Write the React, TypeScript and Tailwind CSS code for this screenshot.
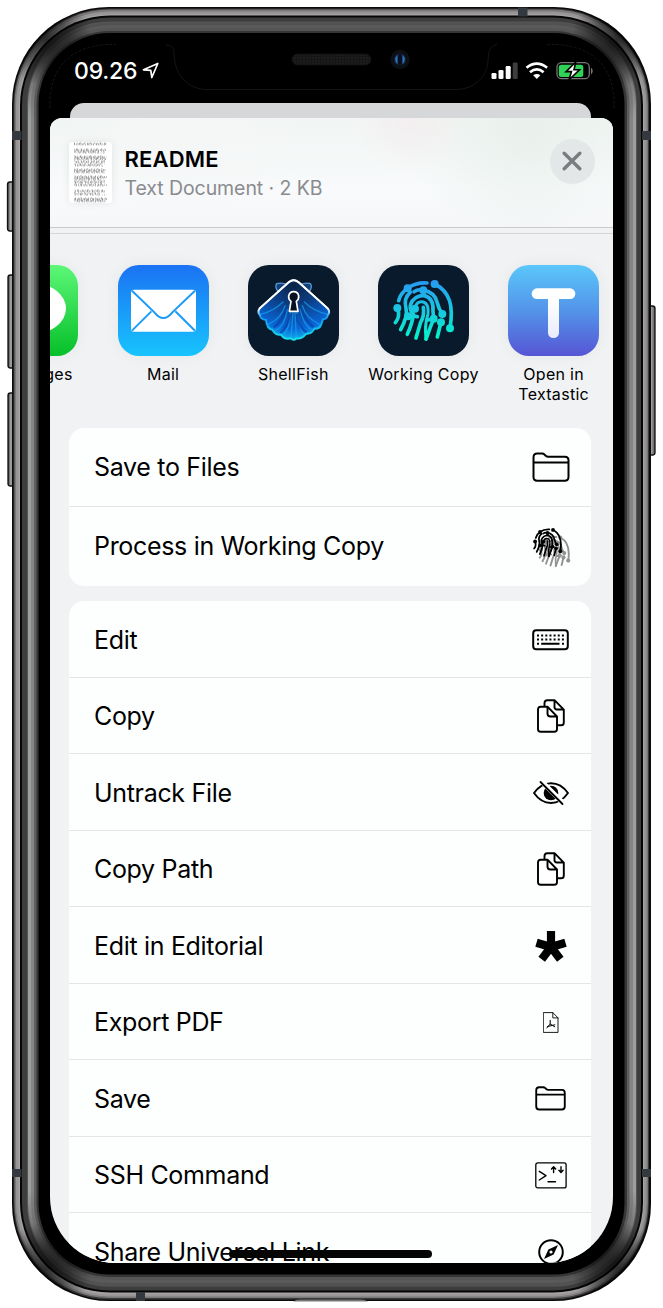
import type { ReactNode } from "react";

type Layer = { x: number; y: number; r: number; b: number; rx: number; fill: string };

const layers: Layer[] = [
  { x: 12, y: 7, r: 651, b: 1301, rx: 97, fill: "#0b0b0c" },
  { x: 13.5, y: 8.5, r: 649, b: 1299.5, rx: 96, fill: "#3c3a3b" },
  { x: 14.5, y: 9.5, r: 648, b: 1298, rx: 95, fill: "#7b7879" },
  { x: 16, y: 11.5, r: 646.5, b: 1296.5, rx: 94, fill: "#989596" },
  { x: 18.5, y: 14, r: 644, b: 1294.5, rx: 92, fill: "#a5a2a3" },
  { x: 20, y: 15.5, r: 643, b: 1292.5, rx: 90, fill: "#060606" },
  { x: 22, y: 17.5, r: 641, b: 1290.5, rx: 88, fill: "#3c3d3c" },
  { x: 27, y: 21.5, r: 637, b: 1286.5, rx: 83, fill: "#565656" },
  { x: 28, y: 22.5, r: 636, b: 1285.5, rx: 82, fill: "url(#band1)" },
  { x: 31, y: 25, r: 633, b: 1283, rx: 79, fill: "url(#band2)" },
  { x: 34, y: 28, r: 629.5, b: 1280, rx: 76, fill: "url(#band3)" },
  { x: 36.5, y: 31, r: 627, b: 1277, rx: 73, fill: "#363636" },
  { x: 38.5, y: 33, r: 624.5, b: 1274.5, rx: 71, fill: "#000" },
];

function Shell() {
  const keys = [
    { x: 7.5, y: 182, h: 49 },
    { x: 8, y: 275, h: 93 },
    { x: 8, y: 393, h: 93 },
    { x: 648, y: 306, h: 149 },
  ];
  const band = (id: string, side: string, flat: string) => (
    <linearGradient id={id} x1="0" y1="0" x2="0" y2="1">
      <stop offset="0" stopColor={flat} />
      <stop offset=".02" stopColor={flat} />
      <stop offset=".075" stopColor={side} />
      <stop offset=".925" stopColor={side} />
      <stop offset=".98" stopColor={flat} />
      <stop offset="1" stopColor={flat} />
    </linearGradient>
  );
  return (
    <svg className="absolute inset-0" width="663" height="1308" viewBox="0 0 663 1308" aria-hidden="true">
      <defs>
        {band("band1", "#9d9d9d", "#515151")}
        {band("band2", "#858585", "#5a5a5a")}
        {band("band3", "#5f5f5f", "#555555")}
        <radialGradient id="corner">
          <stop offset="0" stopColor="#000" stopOpacity=".7" />
          <stop offset=".5" stopColor="#000" stopOpacity=".45" />
          <stop offset="1" stopColor="#000" stopOpacity="0" />
        </radialGradient>
        <linearGradient id="key">
          <stop offset="0" stopColor="#333" />
          <stop offset=".4" stopColor="#aaa8a9" />
          <stop offset="1" stopColor="#555" />
        </linearGradient>
        <clipPath id="body">
          <rect x="12" y="7" width="639" height="1294" rx="97" />
        </clipPath>
        <pattern id="mesh" width="3" height="3" patternUnits="userSpaceOnUse">
          <rect width="3" height="3" fill="#161616" />
          <circle cx="1" cy="1" r=".7" fill="#292929" />
        </pattern>
      </defs>
      {keys.map((k) => (
        <rect key={k.y} x={k.x} y={k.y} width="7" height={k.h} rx="2.5" fill="url(#key)" stroke="#111" strokeWidth="1.3" />
      ))}
      {layers.map((l) => (
        <rect key={l.x} x={l.x} y={l.y} width={l.r - l.x} height={l.b - l.y} rx={l.rx} fill={l.fill} />
      ))}
      <g clipPath="url(#body)">
        <circle cx="46" cy="40" r="46" fill="url(#corner)" />
        <circle cx="617" cy="40" r="46" fill="url(#corner)" />
        <circle cx="46" cy="1268" r="46" fill="url(#corner)" />
        <circle cx="617" cy="1268" r="46" fill="url(#corner)" />
      </g>
      <g fill="#343940">
        <rect x="12" y="131" width="9.5" height="9" />
        <rect x="642" y="131" width="9" height="9" />
        <rect x="12" y="1169" width="9.5" height="8" />
        <rect x="642" y="1169" width="9" height="8" />
        <rect x="518" y="7.5" width="9.5" height="9" />
        <rect x="136" y="1292" width="9" height="9" />
      </g>
      <path d="M293 1301.500Q296 1299.500 300 1299.500H361Q365 1299.500 368 1301.500Z" fill="#777" />
      <g fill="none" stroke="#1a1a1a" strokeWidth=".8">
        <path d="M50 108V98Q54 49 106 44.500H116" strokeDasharray="3 1.5" />
        <path d="M614 108V98Q610 49 558 44.500H547" strokeDasharray="3 1.5" />
        <path d="M166 45Q174 45 174 53C174 75 188 89.500 207 89.500H456C475 89.500 488 75 488 60Q488 45 497 44.500" />
      </g>
      <rect x="292" y="54" width="79" height="11" rx="5.500" fill="url(#mesh)" stroke="#101010" />
      <circle cx="400" cy="59.500" r="9.700" fill="#0d0f14" />
      <circle cx="400" cy="59.500" r="6" fill="#10213b" />
      <path d="M397.500 54.800Q392.500 59.500 397.500 64.200Z" fill="#2e74b5" />
      <path d="M402.500 54.800Q407.500 59.500 402.500 64.200Z" fill="#2e74b5" />
      <rect x="398" y="54" width="4" height="11" rx="2" fill="#08101f" />
    </svg>
  );
}

function StatusBar() {
  return (
    <div className="flex h-[69px] shrink-0 items-start pt-[21.500px] pr-[19.500px] pl-[24px]">
      <span className="text-[23px] leading-[32px] font-medium tracking-[-0.2px] text-white">09.26</span>
      <svg className="mt-[7px] ml-[4.500px]" width="18" height="18" viewBox="0 0 18 18">
        <path d="M1.500 7.800 15.800 1.500 9.800 15.500 8.800 8.400Z" fill="none" stroke="#fff" strokeWidth="1.700" strokeLinejoin="round" />
      </svg>
      <svg className="mt-[5.500px] ml-auto" width="104" height="22" viewBox="490 60 104 22">
        <g fill="#fff">
          <rect x="491.500" y="73" width="5" height="6" rx="1.300" />
          <rect x="498.500" y="70" width="5" height="9" rx="1.300" />
          <rect x="505.700" y="66" width="5" height="13" rx="1.300" />
          <rect x="512.700" y="62.500" width="5" height="16.500" rx="1.300" fill="#3d3d40" />
          <path d="M533.200 75.200Q536.800 72.700 540.400 75.200L536.800 79Z" />
        </g>
        <g fill="none" stroke="#fff" strokeWidth="2.700">
          <path d="M526.500 67.700Q536.800 59.500 547.100 67.700" />
          <path d="M530 72.200Q536.800 66.500 543.600 72.200" />
        </g>
        <rect x="557" y="62.700" width="32.300" height="16" rx="4.500" fill="none" stroke="#77777a" strokeWidth="1.300" />
        <path d="M591 67.500Q594.500 71 591 74.500Z" fill="#77777a" />
        <rect x="558.800" y="64.700" width="24.500" height="12.200" rx="2.500" fill="#31d158" />
        <path d="M575.800 62 566 71.600H571.500L569 79.800 579.500 69.800H574Z" fill="#fff" stroke="#000" strokeWidth="1.600" />
      </svg>
    </div>
  );
}

function Thumb() {
  const rows = [3, 9, 11, 16, 18, 21, 24, 29, 31, 36, 38, 41, 44, 50, 53, 58, 60];
  return (
    <svg className="shrink-0 rounded-[4px] bg-white shadow-[0_0_9px_rgba(0,0,0,0.08)]" width="43" height="61" viewBox="0 0 43 61">
      {rows.map((y, i) => (
        <g key={y} stroke="#666" strokeWidth="1">
          <line x1="5" x2={i % 4 === 2 ? 31 : 38 - (i % 3)} y1={y - 1} y2={y - 1} strokeDasharray={`${1 + (i % 2) * 0.4} 1.100 .7 1.700 1.600 .9 .6 ${1 + (i % 3) * 0.6}`} strokeDashoffset={i * 2.7} />
          <line x1="5" x2={37 - (i % 5)} y1={y - 2} y2={y - 2} strokeDasharray="1 2.300 .6 1.600 1.500 3.100" strokeDashoffset={i * 3.3} strokeOpacity=".7" />
          <line x1="5.500" x2="36" y1={y} y2={y} strokeDasharray={`.7 1.500 ${1 + (i % 4) * 0.3} 2.200`} strokeDashoffset={i * 1.9} strokeOpacity=".6" />
        </g>
      ))}
    </svg>
  );
}

function Header() {
  return (
    <header className="flex h-[110px] shrink-0 items-start border-b border-[#c9cbcd] bg-[radial-gradient(circle_at_24%_0,#f5f7f7_0,transparent_28%),radial-gradient(circle_at_64%_0,#f3eeef_0,transparent_15%),radial-gradient(circle_at_85%_8%,#e9f1ec_0,transparent_25%),linear-gradient(#f1f5f3_0,#f8fafb_65%,#f6f7f9_100%)] pt-[24px] pr-[18.500px] pl-[19px]">
      <Thumb />
      <div className="ml-[12.500px] pt-[2.500px]">
        <h1 className="text-[22px] leading-[29px] font-semibold tracking-[0.2px] text-black">README</h1>
        <p className="text-[19.500px] leading-[29px] tracking-[-0.08px] text-[#8a8b8e]">Text Document · 2 KB</p>
      </div>
      <button aria-label="Close" className="mt-[-3.500px] ml-auto flex size-[45px] items-center justify-center rounded-full bg-[#e3e7e8]">
        <svg width="20" height="20" viewBox="0 0 20 20">
          <path d="M2.200 2.200 17.800 17.800M17.800 2.200 2.200 17.800" stroke="#797d7f" strokeWidth="3.400" strokeLinecap="round" />
        </svg>
      </button>
    </header>
  );
}

const printDots: [number, number][] = [[203, 116], [284, 103], [172, 175], [250, 122], [307, 193], [225, 177], [204, 200], [281, 207], [303, 218], [330, 236]];

function Print({ color }: { color: string }) {
  return (
    <g stroke={color} fill="none" strokeWidth="11" strokeLinecap="round" strokeLinejoin="round">
      <path d="M176 153Q182 130 203 116Q227 98 261 100" />
      <path d="M284 103C330 126 341 168 330 236" />
      <path d="M172 175C179 192 176 207 166 219" />
      <path d="M203 116 211 128Q190 145 198 176Q204 199 182 240" />
      <path d="M222 126Q235 117 250 122Q285 127 292 160Q296 177 307 193" />
      <path d="M250 122V137Q221 139 212 164Q207 181 220 193Q218 218 202 254" />
      <path d="M250 137Q282 143 279 185L281 207" />
      <path d="M225 177Q228 153 250 157Q267 162 264 193Q253 226 258 268" strokeWidth="9" />
      <path d="M204 200Q220 197 232 201M250 173Q254 198 242 218L228 265" />
      <path d="M281 207Q270 235 258 268" />
      <path d="M281 207 264 211" />
      <path d="M303 218 292 262" />
      {printDots.map(([cx, cy]) => (
        <circle key={`${cx}-${cy}`} cx={cx} cy={cy} r="12" fill={color} stroke="none" />
      ))}
    </g>
  );
}

function MessagesIcon() {
  return (
    <svg width="91" height="91" viewBox="0 0 91 91">
      <defs><linearGradient id="msg" x1="0" y1="0" x2="0" y2="1"><stop stopColor="#5cf777" /><stop offset="1" stopColor="#06bf29" /></linearGradient></defs>
      <rect width="91" height="91" rx="21" fill="url(#msg)" />
      <ellipse cx="45.500" cy="43.500" rx="33.500" ry="25.500" fill="#fff" />
    </svg>
  );
}

function MailIcon() {
  return (
    <svg width="91" height="91" viewBox="233 46 273 273">
      <defs><linearGradient id="mail" x1="0" y1="0" x2="0" y2="1"><stop stopColor="#1b72f3" /><stop offset="1" stopColor="#17c4fd" /></linearGradient></defs>
      <rect x="233" y="46" width="273" height="273" rx="63" fill="url(#mail)" />
      <rect x="272" y="120" width="195" height="126" rx="9" fill="#fff" />
      <path d="M275 123 342 188Q369 222 396 188L464 123M275 243 333 185M464 243 405 185" fill="none" stroke="#1b9bf8" strokeWidth="6" />
    </svg>
  );
}

function ShellFishIcon() {
  return (
    <svg width="91" height="91" viewBox="623 46 273 273">
      <defs>
        <radialGradient id="shell" cx=".5" cy=".1" r=".95"><stop stopColor="#0b2348" /><stop offset=".35" stopColor="#0c3f86" /><stop offset=".75" stopColor="#0a66d8" /><stop offset="1" stopColor="#12c8ee" /></radialGradient>
        <linearGradient id="rim" x1="0" y1="0" x2="0" y2="1"><stop stopColor="#fff" /><stop offset=".48" stopColor="#eaf6ff" /><stop offset=".62" stopColor="#1398ee" /><stop offset="1" stopColor="#16e6ee" /></linearGradient>
      </defs>
      <rect x="623" y="46" width="273" height="273" rx="63" fill="#0a1a2d" />
      <path d="M712 124Q703 111 709 102Q727 98 741 105M779 105Q797 98 810 102Q817 111 808 124" fill="#153f77" stroke="#5299d5" strokeWidth="4" />
      <path d="M746 97Q760 86 774 97L862 176Q871 187 862 197Q860 208 848 209L842 226Q837 238 822 237Q814 254 798 252Q783 270 768 266Q760 275 751 266Q733 271 722 255Q706 257 696 240Q680 239 677 211Q661 209 659 197Q650 187 658 176Z" fill="url(#shell)" stroke="url(#rim)" strokeWidth="6" />
      <g fill="none" stroke="#16a7f5" strokeOpacity=".65" strokeWidth="4" strokeLinecap="round">
        <path d="M734 168Q724 206 684 224M741 180Q734 229 704 244M750 190Q748 236 729 258M758 190 752 262M764 190 768 262M770 190Q776 236 791 254M780 180Q789 228 816 241M786 168Q796 205 838 224M660 194Q700 185 728 157M862 194Q820 185 792 157" />
      </g>
      <g fill="none" stroke="#0743a8" strokeWidth="7" strokeOpacity=".7"><path d="M738 175Q726 215 700 234M750 192Q743 232 720 250M783 177Q795 215 820 232M769 193Q775 235 799 248" /></g>
      <path d="M658 176 746 97Q760 86 774 97L862 176" fill="none" stroke="#fff" strokeWidth="5" strokeLinecap="round" />
      <path d="M747 185 752 155Q744 149 745 139Q748 126 760 126Q773 126 775 139Q776 149 768 155L773 185Z" fill="#07111f" stroke="#fff" strokeWidth="5" strokeLinejoin="round" />
    </svg>
  );
}

function WorkingCopyIcon() {
  return (
    <svg width="91" height="91" viewBox="114 46 273 273">
      <defs><linearGradient id="copy" gradientUnits="userSpaceOnUse" x1="0" y1="95" x2="0" y2="272"><stop stopColor="#279bf2" /><stop offset=".5" stopColor="#18c9df" /><stop offset="1" stopColor="#05f4c9" /></linearGradient></defs>
      <rect x="114" y="46" width="273" height="273" rx="63" fill="#0a1a2d" />
      <Print color="url(#copy)" />
    </svg>
  );
}

function TextasticIcon() {
  return (
    <svg width="91" height="91" viewBox="504 46 273 273">
      <defs>
        <linearGradient id="tt" x1="0" y1="0" x2="0" y2="1"><stop stopColor="#5bc7fa" /><stop offset=".5" stopColor="#5394e9" /><stop offset="1" stopColor="#5655d4" /></linearGradient>
        <linearGradient id="tstem" gradientUnits="userSpaceOnUse" x1="0" y1="150" x2="0" y2="264"><stop stopColor="#fff" /><stop offset="1" stopColor="#e8ecfb" /></linearGradient>
      </defs>
      <rect x="504" y="46" width="273" height="273" rx="63" fill="url(#tt)" />
      <rect x="624" y="120" width="33" height="145" rx="16" fill="url(#tstem)" />
      <rect x="575" y="116" width="131" height="32" rx="16" fill="#fff" />
    </svg>
  );
}

const apps: { name: ReactNode; icon: ReactNode }[] = [
  { name: "Messages", icon: <MessagesIcon /> },
  { name: "Mail", icon: <MailIcon /> },
  { name: "ShellFish", icon: <ShellFishIcon /> },
  { name: "Working Copy", icon: <WorkingCopyIcon /> },
  { name: <>Open in<br />Textastic</>, icon: <TextasticIcon /> },
];

function AppRow() {
  return (
    <div className="mt-[5px] ml-[-82.200px] flex h-[195px] w-[651px] shrink-0 border-t border-[#d3d5d7] pt-[31px]">
      {apps.map((a, i) => (
        <div key={i} className="flex w-[130.200px] shrink-0 flex-col items-center">
          <div className="rounded-[21px] shadow-[0_0_16px_rgba(0,0,0,0.05)]">{a.icon}</div>
          <span className="mt-[8px] text-center text-[16px] leading-[20px] tracking-[0.3px] whitespace-nowrap text-black">{a.name}</span>
        </div>
      ))}
    </div>
  );
}

const line = { fill: "none", stroke: "#000", strokeLinecap: "round", strokeLinejoin: "round" } as const;

function Folder({ size }: { size: number }) {
  return (
    <svg width={size} height={size * 0.8} viewBox="0 0 38 30.400" {...line} strokeWidth={size > 35 ? 2 : 2.300}>
      <path d="M1.500 5.200Q1.500 1.500 5.200 1.500H10Q11.500 1.500 12.700 2.700L13.700 3.700Q14.800 4.700 16.400 4.700H33Q36.500 4.700 36.500 8.200V25Q36.500 28.800 32.800 28.800H5.200Q1.500 28.800 1.500 25ZM1.500 10.500H36.500" />
    </svg>
  );
}

function PrintStack() {
  return (
    <svg width="40" height="44" viewBox="92 282 120 132">
      <g transform="translate(32 269) scale(.52)"><Print color="#929292" /></g>
      <g transform="translate(21.700 250.400) scale(.48)"><Print color="#000" /></g>
    </svg>
  );
}

function Keyboard() {
  return (
    <svg width="37" height="22" viewBox="0 0 37 22" {...line} strokeWidth="2">
      <rect x="1.200" y="1.200" width="34.600" height="19.100" rx="3" />
      <g strokeLinecap="butt">
        <path d="M5 6.500H32M5 10.500H32" strokeDasharray="2 2.150" />
        <path d="M5 14.800H7M9.200 14.800H27.500M30 14.800H32" />
      </g>
    </svg>
  );
}

function Docs() {
  return (
    <svg width="28" height="34" viewBox="0 0 28 34" {...line} strokeWidth="1.900">
      <path d="M7.500 7V4Q7.500 1.200 10.300 1.200H17.500L26.800 10.700V23.400Q26.800 26.300 24 26.300H20.500M17.500 1.200V8Q17.500 10.500 20 10.500H26.500" />
      <path d="M10.500 7.700H3.600Q1 7.700 1 10.400V30Q1 32.800 3.700 32.800H17.200Q20 32.800 20 30V17.500ZM10.500 7.700V14.500Q10.500 17.500 13.500 17.500H20" fill="#fff" />
    </svg>
  );
}

function EyeOff() {
  return (
    <svg width="36" height="26" viewBox="0 0 36 26" {...line} strokeWidth="1.900">
      <path d="M1 13Q8 3.200 18 3.200T35 13Q28 23 18 23T1 13Z" />
      <circle cx="18" cy="13" r="7.300" fill="#000" stroke="none" />
      <path d="M8 .8 31 23.700" stroke="#fff" strokeWidth="4.800" />
      <path d="M7.500 2 29.500 24" strokeWidth="1.800" />
    </svg>
  );
}

function Asterisk() {
  return (
    <svg width="32" height="32" viewBox="0 0 32 32" stroke="#000" strokeWidth="8.200">
      <path d="M16 17V1M16 17 1.500 12.700M16 17 30.500 12.700M16 17 6.700 29.300M16 17 25.300 29.300" />
    </svg>
  );
}

function Pdf() {
  return (
    <svg width="16" height="21" viewBox="0 0 16 21" {...line} strokeWidth=".9">
      <path d="M.7.600H9.800L15 5.900V20.400H.7ZM9.800.600V5.900H15" />
      <path d="M7.200 8.300V12L3.800 16M4.500 14.600 11.800 12.800M7.200 12 11.800 14.800" strokeWidth="1" />
    </svg>
  );
}

function Terminal() {
  return (
    <svg width="32" height="27" viewBox="0 0 32 27" {...line} strokeWidth="1.300">
      <rect x=".8" y=".9" width="30.300" height="25" rx="2" />
      <path d="M4.300 9.300 11 13.700 4.300 18M13 19.800H20.500M18.600 10.500V4.900M16.500 7 18.600 4.700 20.700 7M26 4.700V10.300M23.900 8.200 26 10.500 28.100 8.200" strokeWidth="1.400" />
    </svg>
  );
}

function Compass() {
  return (
    <svg width="26" height="26" viewBox="0 0 26 26">
      <circle cx="13" cy="13" r="11.800" fill="none" stroke="#000" strokeWidth="2" />
      <path d="M20 6 15.600 15.600 6 20 10.400 10.400Z" fill="#000" />
      <circle cx="13" cy="13" r="1.600" fill="#fff" />
    </svg>
  );
}

type Action = { label: string; icon: ReactNode };

const primary: Action[] = [
  { label: "Save to Files", icon: <Folder size={38} /> },
  { label: "Process in Working Copy", icon: <PrintStack /> },
];

const secondary: Action[] = [
  { label: "Edit", icon: <Keyboard /> },
  { label: "Copy", icon: <Docs /> },
  { label: "Untrack File", icon: <EyeOff /> },
  { label: "Copy Path", icon: <Docs /> },
  { label: "Edit in Editorial", icon: <Asterisk /> },
  { label: "Export PDF", icon: <Pdf /> },
  { label: "Save", icon: <Folder size={31} /> },
  { label: "SSH Command", icon: <Terminal /> },
  { label: "Share Universal Link", icon: <Compass /> },
];

function Row({ action, tall }: { action: Action; tall?: boolean }) {
  return (
    <li className={`${tall ? "h-[78.500px]" : "h-[76.530px] pt-[2px]"} flex shrink-0 items-center justify-between border-b border-[#e4e6e6] pl-[25px] last:border-b-0`}>
      <span className="pt-[1px] text-[25px] tracking-[-0.32px] whitespace-nowrap text-black">{action.label}</span>
      <span className="flex w-[80px] items-center justify-center">{action.icon}</span>
    </li>
  );
}

export default function App() {
  return (
    <div className="relative h-[1308px] w-[663px] overflow-hidden bg-white font-['Inter',sans-serif]">
      <Shell />
      <main className="relative mt-[33px] ml-[50px] flex h-[1230px] w-[563px] flex-col overflow-hidden rounded-b-[66px]">
        <StatusBar />
        <div className="mt-[1px] ml-[19.500px] h-[15px] w-[521px] shrink-0 rounded-t-[14px] bg-[#d6d7d9]" />
        <section className="flex h-[1145px] shrink-0 flex-col overflow-hidden rounded-t-[12px] bg-[#f1f2f4]">
          <Header />
          <AppRow />
          <ul className="mr-[22.500px] ml-[19px] h-[157.500px] shrink-0 overflow-hidden rounded-[15px] bg-[#fdfefe]">
            {primary.map((a) => <Row key={a.label} action={a} tall />)}
          </ul>
          <ul className="mt-[15.500px] mr-[22.500px] ml-[19px] shrink-0 overflow-hidden rounded-t-[15px] bg-[#fdfefe]">
            {secondary.map((a) => <Row key={a.label} action={a} />)}
          </ul>
        </section>
        <div className="absolute bottom-[5px] left-[179px] h-[8px] w-[203px] rounded-full bg-[#050505]" />
      </main>
    </div>
  );
}
